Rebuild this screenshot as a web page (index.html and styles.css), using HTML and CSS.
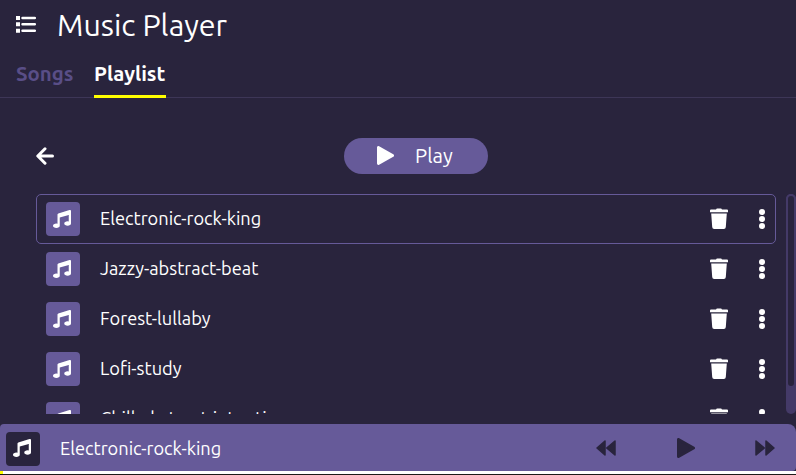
FILE: index.html
```html
<!DOCTYPE html>
<html lang="en">
<head>
<meta charset="utf-8">
<title>Music Player</title>
<link rel="stylesheet" href="styles.css">
</head>
<body>
<svg class="defs" aria-hidden="true">
  <symbol id="note" viewBox="0 0 512 512"><path d="M470.380 1.510L150.410 96A32 32 0 0 0 128 126.510v261.410A139 139 0 0 0 96 384c-53 0-96 28.660-96 64s43 64 96 64 96-28.660 96-64V214.320l256-75v184.610a138.400 138.400 0 0 0-32-3.930c-53 0-96 28.660-96 64s43 64 96 64 96-28.650 96-64V32a32 32 0 0 0-41.620-30.490z"/></symbol>
  <symbol id="play" viewBox="0 0 18 20"><path d="M1.500 1.500v17L16.500 10z" stroke="currentColor" stroke-width="3" stroke-linejoin="round"/></symbol>
  <symbol id="trash" viewBox="0 0 18 21"><path d="M6 1.600 6.800.5h4.400l.8 1.100h5q1 0 1 1v1.600H0V2.600q0-1 1-1zM1.200 5.600h15.600L15.800 19q-.1 2-2 2H4.200q-1.900 0-2-2z"/></symbol>
  <symbol id="dots" viewBox="0 0 6 20"><circle cx="3" cy="3" r="3"/><circle cx="3" cy="10" r="3"/><circle cx="3" cy="17" r="3"/></symbol>
  <symbol id="forward" viewBox="0 0 20 16"><path d="M1 1v14l8.300-7zM11 1v14l8-7z" stroke="currentColor" stroke-width="1.500" stroke-linejoin="round"/></symbol>
</svg>
<header class="header">
  <svg class="menu" viewBox="0 0 20 17"><path d="M0 0h4v4H0zM0 6.300h4v4H0zM0 12.700h4v4H0z"/><path d="M6.500 2H18.800M6.500 8.300H18.800M6.500 14.700H18.800" stroke="#fff" stroke-width="2.500" stroke-linecap="round"/></svg>
  <h1 class="title">Music Player</h1>
</header>
<nav class="tabs">
  <a class="tab tab-songs">Songs</a>
  <a class="tab tab-active">Playlist</a>
</nav>
<main class="main">
  <div class="toolbar">
    <svg class="back" viewBox="0 0 18 18"><path d="M9 1.800 1.800 9 9 16.200M2.500 9h14" fill="none" stroke="#fff" stroke-width="3" stroke-linecap="round" stroke-linejoin="round"/></svg>
    <button class="play-button"><svg class="play-icon"><use href="#play"/></svg><span class="play-label">Play</span></button>
  </div>
  <div class="playlist">
    <ul class="songs">
      <li class="song song-current"><span class="cover"><svg class="note"><use href="#note"/></svg></span><span class="name">Electronic-rock-king</span><svg class="trash"><use href="#trash"/></svg><svg class="dots"><use href="#dots"/></svg></li>
      <li class="song"><span class="cover"><svg class="note"><use href="#note"/></svg></span><span class="name">Jazzy-abstract-beat</span><svg class="trash"><use href="#trash"/></svg><svg class="dots"><use href="#dots"/></svg></li>
      <li class="song"><span class="cover"><svg class="note"><use href="#note"/></svg></span><span class="name">Forest-lullaby</span><svg class="trash"><use href="#trash"/></svg><svg class="dots"><use href="#dots"/></svg></li>
      <li class="song"><span class="cover"><svg class="note"><use href="#note"/></svg></span><span class="name">Lofi-study</span><svg class="trash"><use href="#trash"/></svg><svg class="dots"><use href="#dots"/></svg></li>
      <li class="song"><span class="cover"><svg class="note"><use href="#note"/></svg></span><span class="name">Chill-abstract-intention</span><svg class="trash"><use href="#trash"/></svg><svg class="dots"><use href="#dots"/></svg></li>
    </ul>
    <div class="scrollbar"><div class="thumb"></div></div>
  </div>
</main>
<footer class="player">
  <span class="cover cover-dark"><svg class="note"><use href="#note"/></svg></span>
  <span class="name">Electronic-rock-king</span>
  <svg class="skip skip-back"><use href="#forward"/></svg>
  <svg class="player-play"><use href="#play"/></svg>
  <svg class="skip"><use href="#forward"/></svg>
</footer>
<div class="progress"><div class="progress-value"></div></div>
<div class="edge"></div>
</body>
</html>
```
FILE: styles.css
```css
* { box-sizing: border-box; }
body {
  margin: 0;
  height: 475px;
  overflow: hidden;
  display: flex;
  flex-direction: column;
  background: #29243d;
  color: #fff;
  font-family: Ubuntu, "Noto Sans", sans-serif;
}
svg { display: block; flex: none; fill: currentColor; }
.defs { display: none; }
.header { display: flex; align-items: center; height: 50px; padding-left: 16px; }
.menu { width: 20px; height: 17px; margin-bottom: 1px; }
.title { margin: 0 0 0 21px; font-size: 30.4px; font-weight: 400; line-height: 50px; }
.tabs { display: flex; gap: 21px; height: 48px; padding-left: 16px; border-bottom: 1px solid #3d3657; }
.tab { height: 48px; line-height: 47px; font-size: 20.4px; font-weight: 700; white-space: nowrap; }
.tab-songs { width: 57px; color: #594e87; }
.tab-active { width: 72px; border-bottom: 3px solid #ff0; }
.main { height: 326px; padding: 40px 0 0 36px; }
.toolbar { display: flex; align-items: center; height: 36px; }
.back { width: 18px; height: 18px; }
.play-button {
  display: flex; align-items: center; gap: 21px;
  width: 144px; height: 36px; margin-left: 290px; padding: 0 0 0 33px;
  border: 0; border-radius: 18px; background: #665a99; color: #fff;
  font: 20.3px Ubuntu, "Noto Sans", sans-serif;
}
.play-icon { width: 17px; height: 19px; margin-bottom: 2px; }
.play-label { margin-bottom: 2px; }
.playlist { display: flex; height: 220px; margin-top: 20px; overflow: hidden; }
.songs { list-style: none; margin: 0; padding: 0; width: 740px; }
.song { display: flex; align-items: center; height: 50px; padding: 0 10px 0 9px; border: 1px solid transparent; border-radius: 5px; }
.song-current { border-color: #665a99; }
.cover { display: flex; align-items: center; justify-content: center; width: 34px; height: 34px; border-radius: 4px; background: #665a99; }
.cover-dark { background: #29243d; }
.note { width: 18px; height: 18px; margin: 0 2px 1px 0; }
.name { flex: 1; margin-left: 20px; font-size: 18.24px; white-space: nowrap; }
.song .name { margin-bottom: 2px; }
.trash { width: 18px; height: 21px; margin-bottom: 2px; }
.dots { width: 6px; height: 20px; margin: 0 0 1px 31px; }
.scrollbar { width: 10px; height: 220px; margin-left: 10px; border-radius: 5px; background: #443a68; }
.thumb { height: 194px; border: 2px solid #443a68; border-radius: 5px; background: #29243d; }
.player { display: flex; align-items: center; height: 47px; padding: 2px 21px 0 6px; border-radius: 4px 8px 4px 0; background: #665a99; }
.player .name { margin-bottom: 1px; }
.player svg:not(.note) { color: #29243d; }
.skip { width: 20px; height: 16px; margin-bottom: 1px; }
.skip-back { transform: scaleX(-1); }
.player-play { width: 18px; height: 20px; margin: 0 60px 1px 61px; }
.progress { height: 3px; background: #fff; }
.progress-value { width: 3px; height: 3px; background: #ff0; }
.edge { height: 1px; background: #1c1b1a; }
```
